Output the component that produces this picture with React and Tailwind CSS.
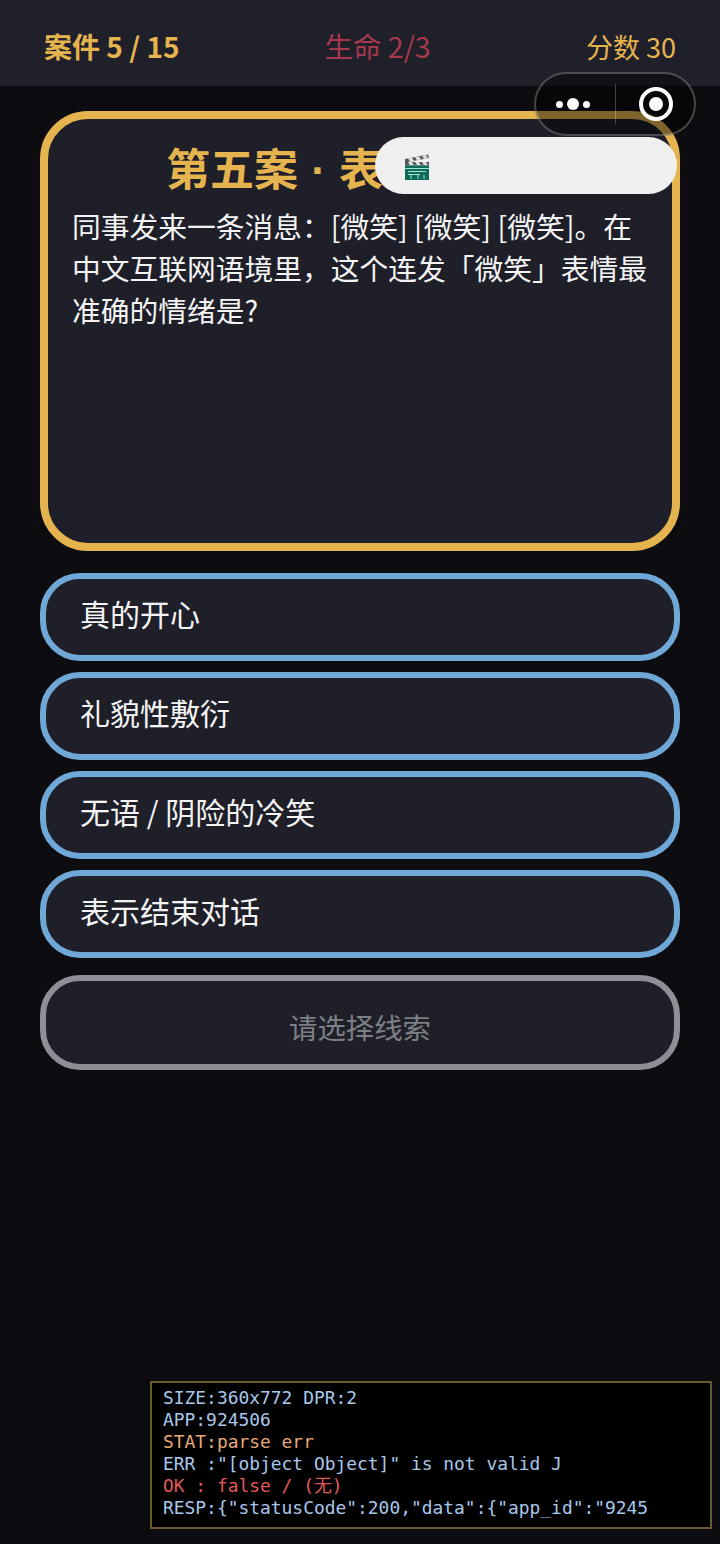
import React from "react";

const options = ["真的开心", "礼貌性敷衍", "无语 / 阴险的冷笑", "表示结束对话"];

const Clapper = () => (
  <svg width="26" height="27" viewBox="0 0 26 27" className="mt-[3px] block">
    <path d="M1 5 L24 0.5 L25 4 L1 8.5 Z" fill="#55555a" />
    <path d="M4 4.4 L8 3.6 L10 7 L6 7.8 Z M11 3 L15 2.2 L17 5.6 L13 6.4 Z M18 1.7 L22 0.9 L24 4.3 L20 5 Z" fill="#dedede" />
    <path d="M1 8 H25 L25 11.5 H1 Z" fill="#55555a" />
    <path d="M4 8 H8 L10 11.5 H6 Z M11 8 H15 L17 11.5 H13 Z M18 8 H22 L24 11.5 H20 Z" fill="#dedede" />
    <rect x="1" y="11.5" width="24" height="14.5" fill="#0e6b5b" />
    <path d="M1 14.5 H25 M4 17.5 H22 M4 20.5 H16" stroke="#9fe3d3" strokeWidth="1" />
    <path d="M7 21 V25 M14 21 V25 M20 21 V25" stroke="#9fe3d3" strokeWidth="1" />
  </svg>
);

const Capsule = () => (
  <div className="absolute left-[534px] top-[72px] flex h-[64px] w-[162px] items-center rounded-full border-2 border-white/25 bg-black/45">
    <div className="flex w-[79px] items-center justify-end gap-[4px] pr-[25px]">
      <span className="h-[7px] w-[7px] rounded-full bg-white" />
      <span className="h-[12px] w-[12px] rounded-full bg-white" />
      <span className="h-[7px] w-[7px] rounded-full bg-white" />
    </div>
    <span className="h-[40px] w-[1px] bg-white/25" />
    <div className="ml-[23px] flex h-[34px] w-[34px] items-center justify-center rounded-full border-[4px] border-white">
      <span className="h-[14px] w-[14px] rounded-full bg-white" />
    </div>
  </div>
);

export default function App() {
  return (
    <div className="relative h-[1544px] w-[720px] overflow-hidden bg-[#0d0d11] font-['Noto_Sans_CJK_SC',sans-serif]">
      <header className="flex h-[86px] items-center bg-[#1f202a] pl-[44px] pr-[44px] pt-[6px] text-[28px] leading-none">
        <span className="mr-[145px] font-bold text-[#e5b44f]">案件 5 / 15</span>
        <span className="text-[28.5px] text-[#a8384c]">生命 2/3</span>
        <span className="ml-auto text-[27px] text-[#e5b44f]">分数 30</span>
      </header>

      <main className="flex flex-col px-[40px] pt-[25px]">
        <section className="h-[440px] rounded-[48px] border-[8px] border-[#e5b44f] bg-[#1e1f29] pl-[25px] pr-[20px] pt-[16px]">
          <h1 className="pl-[93px] text-[44px] font-bold leading-[64px] text-[#e5b44f]">
            第五案<span className="mx-[1px] font-['Liberation_Sans']"> · </span>表
          </h1>
          <p className="-ml-[1px] mt-[2px] text-[28.75px] leading-[42px] text-[#f4f4f4]">
            同事发来一条消息：[微笑] [微笑] [微笑]。在中文互联网语境里，这个连发「微笑」表情最准确的情绪是?
          </p>
        </section>

        <div className="mt-[22px] flex flex-col gap-[11px]">
          {options.map((text) => (
            <div
              key={text}
              className="flex h-[88px] items-center rounded-[40px] border-[6px] border-[#6fa8d6] bg-[#1e1f29] pb-[8px] pl-[34px] text-[30px] text-[#f4f4f4]"
            >
              {text}
            </div>
          ))}
        </div>

        <button className="mt-[17px] h-[95px] rounded-[40px] border-[6px] border-[#8e8e96] bg-[#1e1f29] pt-[10px] text-[28.4px] text-[#7f7f86]">
          请选择线索
        </button>
      </main>

      <Capsule />

      <div className="absolute left-[375px] top-[137px] flex h-[57px] w-[302px] items-center rounded-full bg-[#f0f0f0] pl-[29px]">
        <Clapper />
      </div>

      <div className="absolute left-[150px] top-[1381px] h-[148px] w-[562px] border-2 border-[#6b5a2f] bg-black px-[11px] pt-[4px] font-['DejaVu_Sans_Mono','Noto_Sans_CJK_SC',monospace] text-[17.92px] leading-[22px] whitespace-pre text-[#a8c8ec]">
        <div>SIZE:360x772 DPR:2</div>
        <div>APP:924506</div>
        <div className="text-[#e8a878]">STAT:parse err</div>
        <div>ERR :"[object Object]" is not valid J</div>
        <div className="text-[#e05a5a]">OK : false / (无)</div>
        <div>RESP:{'{"statusCode":200,"data":{"app_id":"9245'}</div>
      </div>
    </div>
  );
}
